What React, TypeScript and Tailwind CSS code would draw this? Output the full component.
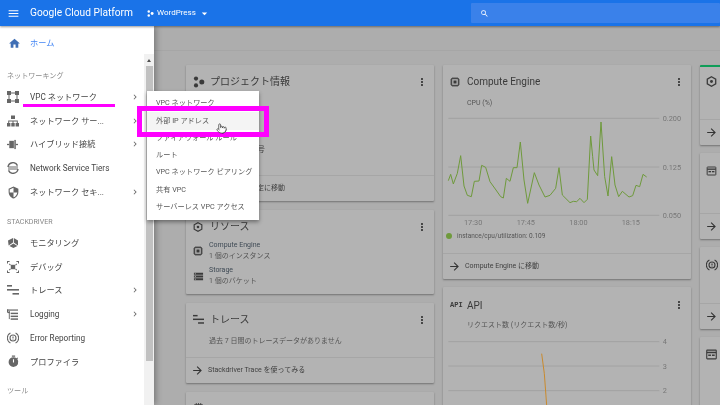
import type { ReactNode } from "react";
import {
  MdArrowDropDown,
  MdArrowForward,
  MdChevronRight,
  MdHome,
  MdMenu,
  MdMoreVert,
  MdSearch,
  MdSecurity,
  MdStorage,
  MdTimer,
} from "react-icons/md";
import { Pointer } from "lucide-react";

const fontStack = "font-['Roboto','Noto_Sans_CJK_JP',sans-serif]";

const cpuPoints =
  "55,362 62,343 70,372 82,340 92,287 102,378 112,406 124,410 133,364 147,363 155,316 167,322 180,365 198,390 212,410 220,414 229,355 240,364 250,323 261,323 271,246 282,360 293,430 313,338 327,375 345,411 360,406 377,385 387,323 397,405 420,428 430,424 440,425 450,415 462,428 472,418 482,228 488,290 492,330 503,347 513,186 524,350 534,408 545,290 555,375 566,410 577,394 597,411 608,407 618,376 629,380 639,343 650,351";

function DotsIcon({ className }: { className?: string }) {
  return (
    <svg viewBox="0 0 12 12" className={className} fill="currentColor">
      <circle cx="3" cy="2.6" r="2.1" />
      <circle cx="3" cy="9.4" r="2.1" />
      <circle cx="8.8" cy="6" r="2.5" />
    </svg>
  );
}

function TraceIcon({ className }: { className?: string }) {
  return (
    <svg viewBox="0 0 12 12" className={className} fill="currentColor">
      <rect x="0" y="1" width="5" height="1.6" />
      <rect x="0" y="5" width="12" height="1.6" />
      <rect x="5.5" y="9" width="6.5" height="1.6" />
    </svg>
  );
}

function HexIcon({ className }: { className?: string }) {
  return (
    <svg viewBox="0 0 12 12" className={className} fill="none" stroke="currentColor">
      <path d="M6 .8 10.6 3.4V8.6L6 11.2 1.4 8.6V3.4Z" strokeWidth="1.4" />
      <circle cx="6" cy="6" r="1.6" fill="currentColor" stroke="none" />
    </svg>
  );
}

function ChipIcon({ className }: { className?: string }) {
  return (
    <svg viewBox="0 0 12 12" className={className} fill="none" stroke="currentColor">
      <rect x="2" y="2" width="8" height="8" strokeWidth="1.2" />
      <rect x="4.2" y="4.2" width="3.6" height="3.6" fill="currentColor" stroke="none" />
      <path d="M3.6 0v2M6 0v2M8.4 0v2M3.6 10v2M6 10v2M8.4 10v2M0 3.6h2M0 6h2M0 8.4h2M10 3.6h2M10 6h2M10 8.4h2" strokeWidth="0.9" />
    </svg>
  );
}

function VpcIcon({ className }: { className?: string }) {
  return (
    <svg viewBox="0 0 12 12" className={className} fill="currentColor">
      <rect x="0" y="0" width="4" height="4" />
      <rect x="8" y="0" width="4" height="4" />
      <rect x="0" y="8" width="4" height="4" />
      <rect x="8" y="8" width="4" height="4" />
      <path d="M4 1.5h4v1H4zM4 9.5h4v1H4zM1.5 4h1v4h-1zM9.5 4h1v4h-1z" />
    </svg>
  );
}

function NetServiceIcon({ className }: { className?: string }) {
  return (
    <svg viewBox="0 0 12 12" className={className} fill="currentColor">
      <rect x="4" y="0.5" width="4" height="3.5" />
      <rect x="0" y="8" width="3.4" height="3.5" />
      <rect x="4.3" y="8" width="3.4" height="3.5" />
      <rect x="8.6" y="8" width="3.4" height="3.5" />
      <path d="M1.2 5.5h9.6V8h-1V6.5H6.5V8h-1V6.5H2.2V8h-1z" />
    </svg>
  );
}

function HybridIcon({ className }: { className?: string }) {
  return (
    <svg viewBox="0 0 12 12" className={className} fill="currentColor">
      <rect x="2.5" y="2" width="5" height="8" />
      <rect x="8" y="1" width="1.6" height="10" />
      <rect x="0" y="5.3" width="2.5" height="1.4" />
      <rect x="9.6" y="5.3" width="2.4" height="1.4" />
    </svg>
  );
}

function TiersIcon({ className }: { className?: string }) {
  return (
    <svg viewBox="0 0 12 12" className={className} fill="none" stroke="currentColor" strokeWidth="1.4">
      <path d="M1 5A5 5 0 0 1 10.5 3.6M11 7A5 5 0 0 1 1.5 8.4" />
      <path d="M1 5h10M1 7h10" strokeWidth="1" />
    </svg>
  );
}

function MonitorIcon({ className }: { className?: string }) {
  return (
    <svg viewBox="0 0 12 12" className={className} fill="currentColor">
      <path d="M6 1v4.6L1.6 8.4 1 3.6zM6.8 1 11 3.6v4.8L6.8 5.6zM6.4 6.4l4 2.6L6.4 11l-4-2z" />
    </svg>
  );
}

function DebugIcon({ className }: { className?: string }) {
  return (
    <svg viewBox="0 0 12 12" className={className} fill="currentColor">
      <rect x="3.8" y="3.8" width="4.4" height="4.4" />
      <path d="M0 0h2.6v1H1v1.6H0zM9.4 0H12v2.6h-1V1H9.4zM0 9.4h1V11h1.6v1H0zM11 9.4h1V12H9.4v-1H11zM2.6 2.6l1.2 1.2-.7.7-1.2-1.2zM9.4 2.6l.7.7-1.2 1.2-.7-.7zM3.1 7.5l.7.7-1.2 1.2-.7-.7zM8.9 7.5l1.2 1.2-.7.7-1.2-1.2z" />
    </svg>
  );
}

function LoggingIcon({ className }: { className?: string }) {
  return (
    <svg viewBox="0 0 12 12" className={className} fill="currentColor">
      <rect x="0" y="0.5" width="12" height="1.3" />
      <rect x="0" y="0.5" width="1.3" height="3.5" />
      <rect x="1" y="3" width="2" height="1.5" />
      <rect x="4" y="4" width="8" height="1.6" />
      <rect x="4" y="7.2" width="8" height="1.6" />
      <rect x="4" y="10.2" width="8" height="1.6" />
      <rect x="2" y="2" width="1" height="9" />
    </svg>
  );
}

function ErrorIcon({ className }: { className?: string }) {
  return (
    <svg viewBox="0 0 12 12" className={className} fill="none" stroke="currentColor" strokeWidth="1.1">
      <path d="M3.4 1A5.6 5.6 0 0 0 3.4 11M8.6 1A5.6 5.6 0 0 1 8.6 11" />
      <circle cx="6" cy="6" r="3" />
      <path d="M6 4.4v2.2M6 7.2v.6" />
    </svg>
  );
}

function CalendarIcon({ className }: { className?: string }) {
  return (
    <svg viewBox="0 0 12 12" className={className} fill="none" stroke="currentColor" strokeWidth="1.2">
      <rect x="0.8" y="1.2" width="10.4" height="9.6" rx="0.6" />
      <path d="M1 3.8h10" strokeWidth="1.6" />
      <rect x="2.4" y="6" width="3" height="1.6" fill="currentColor" stroke="none" />
      <rect x="6.5" y="6" width="3" height="1.6" fill="currentColor" stroke="none" />
    </svg>
  );
}

function NavItem({ icon, label, arrow }: { icon: ReactNode; label: string; arrow?: boolean }) {
  return (
    <div className="flex h-[23.8px] items-center pl-[7px] pr-[4px] text-[#555]">
      <span className="flex w-[23px] flex-none items-center text-[#666]">{icon}</span>
      <span className="flex-1 text-[8.2px] whitespace-nowrap text-[#444]">{label}</span>
      {arrow && <MdChevronRight className="h-[10px] w-[10px] text-[#666]" />}
    </div>
  );
}

function SectionLabel({ children, className }: { children: string; className: string }) {
  return <div className={`pl-[7px] text-[7.1px] leading-[10px] text-[#888] ${className}`}>{children}</div>;
}

function Card({
  children,
  className = "",
  footer,
}: {
  children: ReactNode;
  className?: string;
  footer?: string;
}) {
  return (
    <div className={`flex flex-none flex-col rounded-[1px] bg-[#b3b3b3] shadow-[0_1px_2px_rgba(0,0,0,0.35)] ${className}`}>
      <div className="min-h-0 flex-1">{children}</div>
      {footer !== undefined && (
        <div className="flex h-[26px] flex-none items-center gap-[4px] border-t border-[#a6a6a6] pl-[5px] text-[#333]">
          <MdArrowForward className="h-[13px] w-[13px] flex-none" />
          <span className="text-[7px] whitespace-nowrap text-[#3f3f3f]">{footer}</span>
        </div>
      )}
    </div>
  );
}

function CardTitle({ icon, title }: { icon: ReactNode; title: string }) {
  return (
    <div className="flex h-[33px] items-center pl-[7px] pr-[6px] text-[#3a3a3a]">
      <span className="flex w-[17px] flex-none items-center">{icon}</span>
      <span className="flex-1 text-[10px] whitespace-nowrap text-[#3a3a3a]">{title}</span>
      <MdMoreVert className="h-[12px] w-[12px] text-[#2f2f2f]" />
    </div>
  );
}

const menuItems = [
  "VPC ネットワーク",
  "外部 IP アドレス",
  "ファイアウォール ルール",
  "ルート",
  "VPC ネットワーク ピアリング",
  "共有 VPC",
  "サーバーレス VPC アクセス",
];

export default function App() {
  return (
    <div className={`relative flex h-[405px] w-[720px] flex-col overflow-hidden bg-[#adadad] blur-[0.35px] ${fontStack}`}>
      <header className="relative z-20 flex h-[26px] flex-none items-center bg-[#1a73e8] pl-[7px] text-white shadow-[0_1px_2px_rgba(0,0,0,0.4)]">
        <MdMenu className="h-[13px] w-[13px] flex-none" />
        <span className="ml-[10px] w-[117px] flex-none text-[10.2px] whitespace-nowrap">Google Cloud Platform</span>
        <DotsIcon className="h-[7px] w-[7px] flex-none" />
        <span className="ml-[3px] text-[8px]">WordPress</span>
        <MdArrowDropDown className="ml-[2px] h-[13px] w-[13px] flex-none" />
        <div className="ml-[260px] flex h-[20px] flex-1 items-center rounded-[1px] bg-[#3a81ea] pl-[9px]">
          <MdSearch className="h-[9px] w-[9px]" />
        </div>
      </header>

      <div className="flex min-h-0 flex-1">
        <aside className="relative z-10 flex w-[154px] flex-none flex-col bg-white shadow-[2px_0_6px_rgba(0,0,0,0.3)]">
          <div className="flex h-[28px] flex-none items-center pl-[8px] pt-[6px]">
            <MdHome className="h-[13px] w-[13px] flex-none text-[#3f6fb5]" />
            <span className="ml-[9px] text-[8.2px] text-[#4285f4]">ホーム</span>
          </div>
          <div className="flex min-h-0 flex-1">
            <nav className="min-w-0 flex-1">
              <SectionLabel className="mt-[17px] mb-[4px]">ネットワーキング</SectionLabel>
              <NavItem icon={<VpcIcon className="h-[12px] w-[12px]" />} label="VPC ネットワーク" arrow />
              <NavItem icon={<NetServiceIcon className="h-[12px] w-[12px]" />} label="ネットワーク サー..." arrow />
              <NavItem icon={<HybridIcon className="h-[11px] w-[11px]" />} label="ハイブリッド接続" arrow />
              <NavItem icon={<TiersIcon className="h-[12px] w-[12px]" />} label="Network Service Tiers" />
              <NavItem icon={<MdSecurity className="h-[13px] w-[13px]" />} label="ネットワーク セキ..." arrow />
              <SectionLabel className="mt-[13px] mb-[4px]">STACKDRIVER</SectionLabel>
              <NavItem icon={<MonitorIcon className="h-[12px] w-[12px]" />} label="モニタリング" />
              <NavItem icon={<DebugIcon className="h-[12px] w-[12px]" />} label="デバッグ" />
              <NavItem icon={<TraceIcon className="h-[12px] w-[12px]" />} label="トレース" arrow />
              <NavItem icon={<LoggingIcon className="h-[11px] w-[11px]" />} label="Logging" arrow />
              <NavItem icon={<ErrorIcon className="h-[12px] w-[12px]" />} label="Error Reporting" />
              <NavItem icon={<MdTimer className="h-[13px] w-[13px]" />} label="プロファイラ" />
              <SectionLabel className="mt-[12px]">ツール</SectionLabel>
            </nav>
            <div className="flex w-[10px] flex-none flex-col items-center bg-[#f1f1f1]">
              <div className="mt-[5px] h-0 w-0 border-x-[2.5px] border-b-[3px] border-x-transparent border-b-[#505050]" />
              <div className="mt-[4px] h-[295px] w-[7px] bg-[#c1c1c1]" />
            </div>
          </div>
        </aside>

        <main className="min-w-0 flex-1 overflow-hidden">
          <div className="h-[25px] border-b border-[#a6a6a6]" />
          <div className="flex gap-[9px] pl-[32px] pt-[14px]">
            <div className="flex w-[248px] flex-none flex-col gap-[9px]">
              <Card className="h-[136px]" footer="プロジェクト設定に移動">
                <CardTitle icon={<DotsIcon className="h-[12px] w-[12px]" />} title="プロジェクト情報" />
                <div className="pl-[11px] pt-[45px] text-[8.5px] text-[#3f3f3f]">プロジェクト番号</div>
              </Card>
              <Card className="h-[84px]">
                <CardTitle icon={<HexIcon className="h-[10px] w-[10px]" />} title="リソース" />
                <div className="-mt-[3px] flex flex-col gap-[3px] pl-[7px] text-[#3a3a3a]">
                  <div className="flex items-center">
                    <ChipIcon className="h-[10px] w-[10px] flex-none" />
                    <div className="ml-[6px] text-[7px] leading-[11px]">
                      <div className="text-[#3f4a55]">Compute Engine</div>
                      <div className="text-[#555]">1 個のインスタンス</div>
                    </div>
                  </div>
                  <div className="flex items-center">
                    <MdStorage className="h-[11px] w-[11px] flex-none" />
                    <div className="ml-[5px] text-[7px] leading-[11px]">
                      <div className="text-[#3f4a55]">Storage</div>
                      <div className="text-[#555]">1 個のバケット</div>
                    </div>
                  </div>
                </div>
              </Card>
              <Card className="h-[80px]" footer="Stackdriver Trace を使ってみる">
                <CardTitle icon={<TraceIcon className="h-[11px] w-[11px]" />} title="トレース" />
                <div className="pl-[23px] text-[7px] text-[#555]">過去 7 日間のトレースデータがありません</div>
              </Card>
              <Card className="h-[80px]">
                <CardTitle icon={<ChipIcon className="h-[11px] w-[11px]" />} title="" />
              </Card>
            </div>

            <div className="flex w-[248px] flex-none flex-col gap-[8px]">
              <Card className="h-[214px]" footer="Compute Engine に移動">
                <CardTitle icon={<ChipIcon className="h-[10px] w-[10px]" />} title="Compute Engine" />
                <div className="pl-[24px] text-[7px] leading-[10px] text-[#555]">CPU (%)</div>
                <svg viewBox="39 150 744 354" className="mt-[2px] block h-[118px] w-[248px]">
                  <path d="M55 175H688M55 321H688M55 466H688" stroke="#a2a2a2" strokeWidth="3" fill="none" />
                  <polyline points={cpuPoints} fill="none" stroke="#6f9a3c" strokeWidth="3" />
                  <g fontSize="22" fill="#777">
                    <text x="698" y="183">0.200</text>
                    <text x="698" y="329">0.125</text>
                    <text x="698" y="474">0.050</text>
                    <text x="102" y="494">17:30</text>
                    <text x="260" y="494">17:45</text>
                    <text x="418" y="494">18:00</text>
                    <text x="575" y="494">18:15</text>
                  </g>
                </svg>
                <div className="mt-[3px] flex items-center pl-[3px] text-[6.5px] leading-[10px] text-[#555]">
                  <span className="mr-[5px] h-[6px] w-[6px] rounded-full bg-[#6f9a3c]" />
                  instance/cpu/utilization: 0.109
                </div>
              </Card>
              <Card className="h-[120px]">
                <div className="flex h-[36px] items-center pl-[7px] pr-[6px] text-[#3a3a3a]">
                  <span className="w-[17px] flex-none font-['Liberation_Mono',monospace] text-[7px] font-bold">API</span>
                  <span className="flex-1 text-[10px]">API</span>
                  <MdMoreVert className="h-[12px] w-[12px] text-[#2f2f2f]" />
                </div>
                <div className="-mt-[3px] pl-[24px] text-[7px] leading-[10px] text-[#555]">リクエスト数 (リクエスト数/秒)</div>
                <svg viewBox="39 290 744 210" className="mt-[7px] block h-[70px] w-[248px]">
                  <path d="M55 304H688M55 377H688M55 451H688" stroke="#a2a2a2" strokeWidth="3" fill="none" />
                  <polyline points="335,340 343,400 350,495" fill="none" stroke="#c98a2e" strokeWidth="3" />
                  <g fontSize="22" fill="#777">
                    <text x="698" y="312">4</text>
                    <text x="698" y="385">3</text>
                    <text x="698" y="459">2</text>
                  </g>
                </svg>
              </Card>
            </div>

            <div className="flex w-[60px] flex-none flex-col gap-[8px]">
              <Card className="h-[80px] border-t-2 border-[#0f9d58]" footer="">
                <div className="pl-[6px] pt-[9px] text-[#3a3a3a]">
                  <HexIcon className="h-[11px] w-[11px]" />
                </div>
              </Card>
              <Card className="h-[86px]" footer="">
                <div className="pl-[6px] pt-[13px] text-[#3a3a3a]">
                  <CalendarIcon className="h-[10px] w-[11px]" />
                </div>
              </Card>
              <Card className="h-[82px]" footer="">
                <div className="pl-[6px] pt-[12px] text-[#3a3a3a]">
                  <ErrorIcon className="h-[12px] w-[12px]" />
                </div>
              </Card>
              <Card className="h-[70px]">
                <div className="pl-[6px] pt-[12px] text-[#3a3a3a]">
                  <CalendarIcon className="h-[11px] w-[11px]" />
                </div>
              </Card>
            </div>
          </div>
        </main>
      </div>

      <div className="absolute left-[147px] top-[91px] z-30 w-[112px] bg-white py-[4px] shadow-[0_2px_4px_rgba(0,0,0,0.4)]">
        {menuItems.map((item, i) => (
          <div
            key={item}
            className={`flex h-[17.3px] items-center pl-[9px] text-[7.2px] whitespace-nowrap text-[#555] ${i === 1 ? "bg-[#f4f4f4]" : ""}`}
          >
            {item}
          </div>
        ))}
      </div>

      {/* pink annotations drawn on top of the capture */}
      <div className="absolute left-[23px] top-[104px] z-40 h-[3px] w-[92px] bg-[#ff00ff]" />
      <div className="absolute left-[137px] top-[106px] z-40 h-[31px] w-[132px] border-[5px] border-[#ff00ff]" />
      <Pointer className="absolute left-[216px] top-[123px] z-50 h-[11px] w-[11px] fill-white text-[#333]" strokeWidth={1.6} />
    </div>
  );
}
